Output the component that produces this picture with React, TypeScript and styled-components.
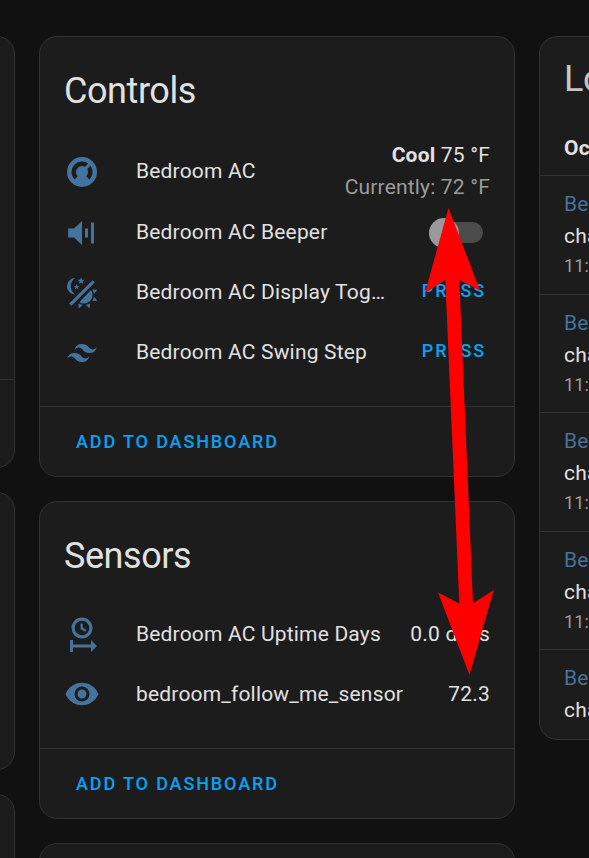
import React from "react";
import styled, { createGlobalStyle } from "styled-components";

const Global = createGlobalStyle`
  * { box-sizing: border-box; }
  html, body { margin: 0; background: #111111; overflow: hidden; }
  body {
    font-family: Roboto, sans-serif;
    font-size: 21px;
    line-height: 32px;
    letter-spacing: 0.18px;
    color: #e1e1e1;
  }
`;

const Board = styled.main`
  position: relative;
  width: 589px;
  height: 858px;
  padding-top: 36px;
  overflow: hidden;
  background: #111111;
  display: flex;
  align-items: flex-start;
  gap: 24px;
`;

const Column = styled.div<{ $lead?: number }>`
  flex: 0 0 476px;
  width: 476px;
  margin-left: ${(p) => p.$lead ?? 0}px;
  display: flex;
  flex-direction: column;
  gap: 24px;
`;

const Card = styled.section<{ $h: number }>`
  flex: none;
  height: ${(p) => p.$h}px;
  border: 1px solid #333333;
  border-radius: 18px;
  background: #1c1c1c;
  overflow: hidden;
  display: flex;
  flex-direction: column;
`;

const Title = styled.h1<{ $dim?: boolean }>`
  margin: 0;
  padding: ${(p) => (p.$dim ? 6 : 18)}px 24px 0;
  height: 102px;
  flex: none;
  font-size: 36px;
  line-height: 72px;
  font-weight: 400;
  letter-spacing: -0.432px;
  color: ${(p) => (p.$dim ? "#c6c6c6" : "#e1e1e1")};
`;

const Rows = styled.div`
  flex: 1;
  padding: 0 24px;
`;

const Row = styled.div<{ $h?: number }>`
  height: ${(p) => p.$h ?? 60}px;
  display: flex;
  align-items: center;
`;

const IconBox = styled.svg<{ $drop?: number }>`
  flex: none;
  width: 36px;
  height: 36px;
  margin-right: 36px;
  margin-top: ${(p) => p.$drop ?? 0}px;
  fill: #44739e;
`;

const Name = styled.span<{ $lift?: boolean }>`
  flex: 1;
  min-width: 0;
  padding-bottom: ${(p) => (p.$lift ? 2 : 0)}px;
  white-space: nowrap;
  overflow: hidden;
  text-overflow: ellipsis;
`;

const Value = styled.div`
  flex: none;
  margin-left: 12px;
  text-align: right;
`;

const Muted = styled.div`
  color: #9b9b9b;
`;

const Action = styled.button`
  border: 0;
  padding: 0;
  background: none;
  font: 500 18px/27px Roboto, sans-serif;
  letter-spacing: 1.87px;
  color: #06a2f8;
`;

const Press = styled(Action)`
  margin: 0 4px 5px 36px;
`;

const Footer = styled.footer<{ $h?: number }>`
  flex: none;
  height: ${(p) => p.$h ?? 70}px;
  border-top: 1px solid #333333;
  padding: 0 0 1px 36px;
  display: flex;
  align-items: center;
`;

const Track = styled.div`
  width: 54px;
  height: 21px;
  margin-right: 7px;
  margin-bottom: 1px;
  border-radius: 11px;
  background: #4b4b4b;
  display: flex;
  align-items: center;
`;

const Knob = styled.div`
  flex: none;
  width: 30px;
  height: 30px;
  border-radius: 50%;
  background: #999999;
`;

const DayHeading = styled.div`
  flex: none;
  height: 36px;
  padding-left: 24px;
  line-height: 18px;
  font-weight: 700;
  white-space: nowrap;
`;

const Entry = styled.div`
  flex: none;
  height: 118.6px;
  padding: 12px 24px;
  border-top: 1px solid #333333;
  white-space: nowrap;
`;

const EntityLink = styled.div`
  color: #44739e;
`;

const Time = styled.div`
  font-size: 18px;
  line-height: 28px;
  color: #9b9b9b;
`;

const Arrow = styled.svg`
  position: absolute;
  inset: 0;
  pointer-events: none;
`;

const icons = {
  thermostat:
    "M16.95,16.95L14.83,14.83C15.55,14.1 16,13.1 16,12C16,11.26 15.79,10.57 15.43,10L17.6,7.81C18.5,9 19,10.43 19,12C19,13.93 18.22,15.68 16.95,16.95M12,5C13.57,5 15,5.5 16.19,6.4L14,8.56C13.43,8.21 12.74,8 12,8A4,4 0 0,0 8,12C8,13.1 8.45,14.1 9.17,14.83L7.05,16.95C5.78,15.68 5,13.93 5,12A7,7 0 0,1 12,5M12,2A10,10 0 0,0 2,12A10,10 0 0,0 12,22A10,10 0 0,0 22,12A10,10 0 0,0 12,2Z",
  beeper: "M2.7,9H6.7L12,4V20L6.7,15H2.7V9M14,9H16V15H14V9M18,5H20V19H18V5Z",
  lightDark:
    "M7.5,2C5.71,3.15 4.5,5.18 4.5,7.5C4.5,9.82 5.71,11.85 7.53,13C4.46,13 2,10.54 2,7.5A5.5,5.5 0 0,1 7.5,2M19.07,3.5L20.5,4.93L4.93,20.5L3.5,19.07L19.07,3.5M12.89,5.93L11.41,5L9.97,6L10.39,4.3L9,3.24L10.75,3.12L11.33,1.47L12,3.1L13.73,3.13L12.38,4.26L12.89,5.93M9.59,9.54L8.43,8.81L7.31,9.59L7.65,8.27L6.56,7.44L7.92,7.35L8.37,6.06L8.88,7.33L10.24,7.36L9.19,8.23L9.59,9.54M19,13.5A5.5,5.5 0 0,1 13.5,19C12.28,19 11.15,18.6 10.24,17.93L17.93,10.24C18.6,11.15 19,12.28 19,13.5M14.6,20.08L17.37,18.93L17.13,22.28L14.6,20.08M18.93,17.38L20.08,14.61L22.28,17.15L18.93,17.38M20.08,12.42L18.94,9.64L22.28,9.88L20.08,12.42M9.63,18.93L12.4,20.08L9.87,22.27L9.63,18.93Z",
  swing:
    "M12,6C9.33,6 7.67,7.33 7,10C8,8.67 9.17,8.17 10.5,8.5C11.26,8.69 11.81,9.24 12.41,9.85C13.39,10.85 14.5,12 17,12C19.67,12 21.33,10.67 22,8C21,9.33 19.83,9.83 18.5,9.5C17.74,9.31 17.2,8.76 16.59,8.15C15.61,7.15 14.5,6 12,6M7,12C4.33,12 2.67,13.33 2,16C3,14.67 4.17,14.17 5.5,14.5C6.26,14.69 6.8,15.24 7.41,15.85C8.39,16.85 9.5,18 12,18C14.67,18 16.33,16.67 17,14C16,15.33 14.83,15.83 13.5,15.5C12.74,15.31 12.2,14.76 11.59,14.15C10.61,13.15 9.5,12 7,12Z",
  clockStart:
    "M12,1C8.14,1 5,4.14 5,8A7,7 0 0,0 12,15C15.86,15 19,11.87 19,8C19,4.14 15.86,1 12,1M12,3.15C14.67,3.15 16.85,5.32 16.85,8C16.85,10.68 14.67,12.85 12,12.85A4.85,4.85 0 0,1 7.15,8A4.85,4.85 0 0,1 12,3.15M11,5V8.69L14.19,10.53L14.94,9.23L12.5,7.82V5M4,16V24H6V21H18V24L22,20L18,16V19H6V16",
  eye: "M12,9A3,3 0 0,0 9,12A3,3 0 0,0 12,15A3,3 0 0,0 15,12A3,3 0 0,0 12,9M12,17A5,5 0 0,1 7,12A5,5 0 0,1 12,7A5,5 0 0,1 17,12A5,5 0 0,1 12,17M12,4.5C7,4.5 2.73,7.61 1,12C2.73,16.39 7,19.5 12,19.5C17,19.5 21.27,16.39 23,12C21.27,7.61 17,4.5 12,4.5Z",
};

const Icon = ({ name, drop }: { name: keyof typeof icons; drop?: number }) => (
  <IconBox viewBox="0 0 24 24" $drop={drop}>
    <path d={icons[name]} />
  </IconBox>
);

const entries = [
  { id: 1, time: "11:" },
  { id: 2, time: "11:" },
  { id: 3, time: "11:" },
  { id: 4, time: "11:" },
  { id: 5, time: null },
];

export default function App() {
  return (
    <>
      <Global />
      <Board>
        <Column $lead={-461}>
          <Card $h={432}>
            <Rows />
            <Footer $h={88} />
          </Card>
          <Card $h={278} />
          <Card $h={200} />
        </Column>

        <Column>
          <Card $h={441}>
            <Title>Controls</Title>
            <Rows>
              <Row $h={64}>
                <Icon name="thermostat" drop={2} />
                <Name>Bedroom AC</Name>
                <Value>
                  <div>
                    <b>Cool</b> 75 °F
                  </div>
                  <Muted>Currently: 72 °F</Muted>
                </Value>
              </Row>
              <Row>
                <Icon name="beeper" />
                <Name $lift>Bedroom AC Beeper</Name>
                <Track>
                  <Knob />
                </Track>
              </Row>
              <Row>
                <Icon name="lightDark" />
                <Name $lift>Bedroom AC Display Toggle</Name>
                <Press>PRESS</Press>
              </Row>
              <Row>
                <Icon name="swing" />
                <Name $lift>Bedroom AC Swing Step</Name>
                <Press>PRESS</Press>
              </Row>
            </Rows>
            <Footer>
              <Action>ADD TO DASHBOARD</Action>
            </Footer>
          </Card>

          <Card $h={318}>
            <Title>Sensors</Title>
            <Rows>
              <Row>
                <Icon name="clockStart" />
                <Name>Bedroom AC Uptime Days</Name>
                <Value>0.0 days</Value>
              </Row>
              <Row>
                <Icon name="eye" />
                <Name>bedroom_follow_me_sensor</Name>
                <Value>72.3</Value>
              </Row>
            </Rows>
            <Footer>
              <Action>ADD TO DASHBOARD</Action>
            </Footer>
          </Card>

          <Card $h={200} />
        </Column>

        <Column>
          <Card $h={704}>
            <Title $dim>Logbook</Title>
            <DayHeading>October</DayHeading>
            {entries.map((entry) => (
              <Entry key={entry.id}>
                <EntityLink>Bedroom</EntityLink>
                <div>changed</div>
                {entry.time && <Time>{entry.time}</Time>}
              </Entry>
            ))}
          </Card>
        </Column>

        <Arrow width="589" height="858" viewBox="0 0 589 858">
          <polygon
            fill="#ff0000"
            points="448.5,208 480,290.500 459.300,280 473,603.500 493.700,590 469.500,675 438,592.500 459.300,603.500 445.300,280 425,293"
          />
        </Arrow>
      </Board>
    </>
  );
}
